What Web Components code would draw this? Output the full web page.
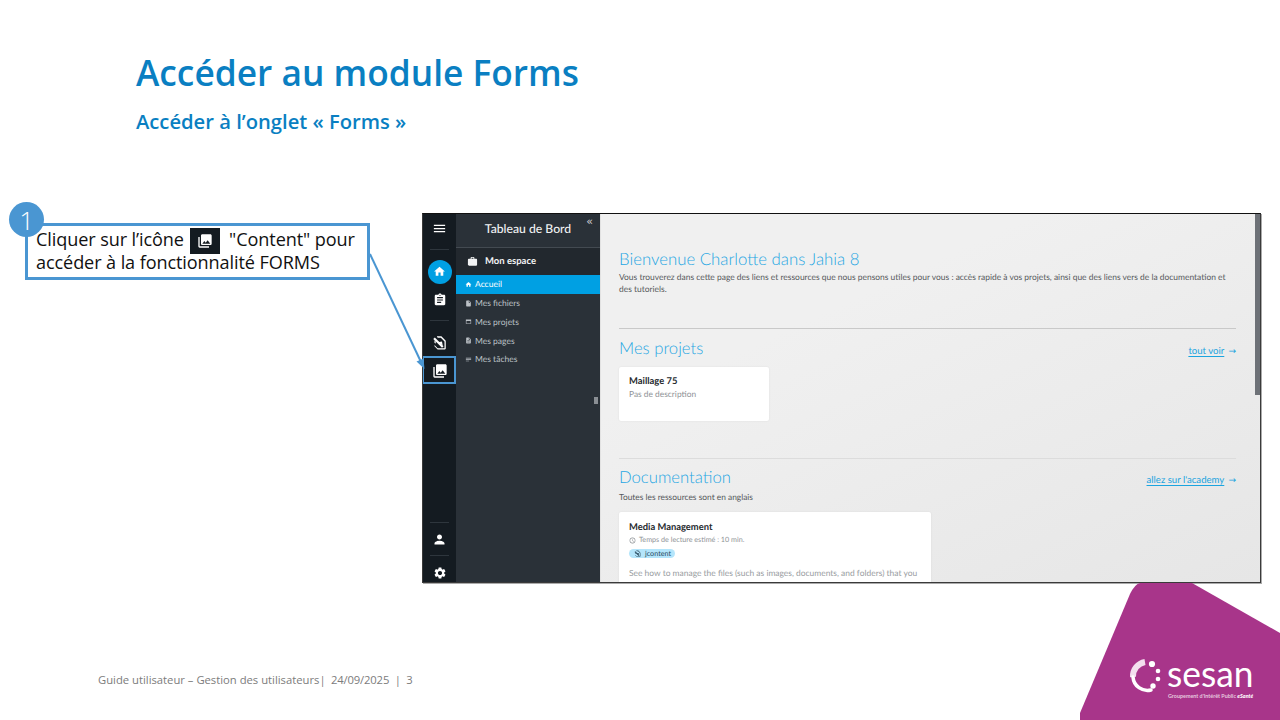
<!DOCTYPE html>
<html lang="fr">
<head>
<meta charset="utf-8">
<title>Accéder au module Forms</title>
<style>
  html, body { margin: 0; padding: 0; background: #fff; }
</style>
</head>
<body>
<slide-page>
  <span slot="title">Accéder au module Forms</span>
  <span slot="subtitle">Accéder à l’onglet « Forms »</span>
  <step-callout slot="callout" number="1">
    <span>Cliquer sur l’icône</span> <ui-icon class="inline" name="media"></ui-icon> <span>"Content" pour</span><br>
    <span>accéder à la fonctionnalité FORMS</span>
  </step-callout>
  <jahia-dashboard slot="shot"></jahia-dashboard>
  <span slot="footer">Guide utilisateur – Gestion des utilisateurs</span>
</slide-page>

<script>
/* Material style icon paths used all over the page */
const ICONS = {
    menu: '<path d="M3 18h18v-2H3v2zm0-5h18v-2H3v2zm0-7v2h18V6H3z"/>',
    home: '<path d="M10 20v-6h4v6h5v-8h3L12 3 2 12h3v8z"/>',
    clipboard: '<path d="M19 3h-4.18C14.4 1.84 13.3 1 12 1c-1.3 0-2.4.84-2.82 2H5c-1.1 0-2 .9-2 2v14c0 1.1.9 2 2 2h14c1.1 0 2-.9 2-2V5c0-1.1-.9-2-2-2zm-7 0c.55 0 1 .45 1 1s-.45 1-1 1-1-.45-1-1 .45-1 1-1zm2 14H7v-2h7v2zm3-4H7v-2h10v2zm0-4H7V7h10v2z"/>',
    media: '<path d="M22 16V4c0-1.1-.9-2-2-2H8c-1.1 0-2 .9-2 2v12c0 1.1.9 2 2 2h12c1.1 0 2-.9 2-2zm-11-4l2.03 2.71L16 11l4 5H8l3-4zM2 6v14c0 1.1.9 2 2 2h14v-2H4V6H2z"/>',
    person: '<path d="M12 12c2.21 0 4-1.79 4-4s-1.79-4-4-4-4 1.79-4 4 1.79 4 4 4zm0 2c-2.67 0-8 1.34-8 4v2h16v-2c0-2.66-5.33-4-8-4z"/>',
    gear: '<path d="M19.14 12.94c.04-.3.06-.61.06-.94 0-.32-.02-.64-.07-.94l2.03-1.58c.18-.14.23-.41.12-.61l-1.92-3.32c-.12-.22-.37-.29-.59-.22l-2.39.96c-.5-.38-1.03-.7-1.62-.94l-.36-2.54c-.04-.24-.24-.41-.48-.41h-3.84c-.24 0-.43.17-.47.41l-.36 2.54c-.59.24-1.13.57-1.62.94l-2.39-.96c-.22-.08-.47 0-.59.22L2.74 8.87c-.12.21-.08.47.12.61l2.03 1.58c-.05.3-.09.63-.09.94s.02.64.07.94l-2.03 1.58c-.18.14-.23.41-.12.61l1.92 3.32c.12.22.37.29.59.22l2.39-.96c.5.38 1.03.7 1.62.94l.36 2.54c.05.24.24.41.48.41h3.84c.24 0 .44-.17.47-.41l.36-2.54c.59-.24 1.13-.56 1.62-.94l2.39.96c.22.08.47 0 .59-.22l1.92-3.32c.12-.22.07-.47-.12-.61l-2.01-1.58zM12 15.6c-1.98 0-3.6-1.62-3.6-3.6s1.62-3.6 3.6-3.6 3.6 1.62 3.6 3.6-1.62 3.6-3.6 3.6z"/>',
    work: '<path d="M20 6h-4V4c0-1.11-.89-2-2-2h-4c-1.11 0-2 .89-2 2v2H4c-1.11 0-1.99.89-1.99 2L2 19c0 1.11.89 2 2 2h16c1.11 0 2-.89 2-2V8c0-1.11-.89-2-2-2zm-6 0h-4V4h4v2z"/>',
    file: '<path d="M14 2H6c-1.1 0-1.99.9-1.99 2L4 20c0 1.1.89 2 1.99 2H18c1.1 0 2-.9 2-2V8l-6-6zm-1 7V3.5L18.5 9H13z"/>',
    page: '<path d="M14 2H6c-1.1 0-1.99.9-1.99 2L4 20c0 1.1.89 2 1.99 2H18c1.1 0 2-.9 2-2V8l-6-6zm2 16H8v-2h8v2zm0-4H8v-2h8v2zm-3-5V3.5L18.5 9H13z"/>',
    project: '<path d="M3 5h18v15H3V5zm2 5v8h14v-8H5z"/>',
    tasks: '<path d="M3 6h18v2.4H3zM3 11h18v2.4H3zM3 16h11v2.4H3z"/>',
    clock: '<path d="M12 2a10 10 0 1 0 0 20 10 10 0 0 0 0-20zm0 18a8 8 0 1 1 0-16 8 8 0 0 1 0 16zm.5-13H11v6l5.2 3.1.8-1.2-4.5-2.7V7z"/>',
    jcontent: '<path d="M8 2h7l7 7v12.5c0 .8-.7 1.5-1.5 1.5H9l-5-5v-2l5 5h11V10.5L14.2 4.5H9.5L8 3z"/><path d="M2 6.5 4.5 4 18.5 18 16 20.5z"/><path d="M9 11.5l7-1 1 6z"/><path d="M4 8.5 6 10.5V14L4 12z"/>'
};

class UiIcon extends HTMLElement {
    connectedCallback() {
        const name = this.getAttribute("name");
        this.attachShadow({ mode: "open" }).innerHTML = `
            <style>
                :host { display: inline-flex; align-items: center; justify-content: center; color: inherit; }
                :host(.inline) {
                    width: 30px; height: 26px; margin: -4px 5px -4px 1px; --icon-size: 16px;
                    vertical-align: middle; background: #141b21; color: #fff;
                }
                svg { width: var(--icon-size, 14px); height: var(--icon-size, 14px); fill: currentColor; display: block; }
            </style>
            <svg viewBox="0 0 24 24" aria-hidden="true">${ICONS[name] || ""}</svg>`;
    }
}

/* The numbered instruction box, number sits over its top left corner */
class StepCallout extends HTMLElement {
    connectedCallback() {
        this.attachShadow({ mode: "open" }).innerHTML = `
            <style>
                :host {
                    display: block; position: relative; box-sizing: border-box;
                    width: 345px; height: 57px; padding: 2px 8px 0;
                    border: 3px solid #4a96d2; background: #fff; color: #111;
                    font: 400 18.1px/23px "Open Sans", "Noto Sans", sans-serif;
                    letter-spacing: -.1px; white-space: nowrap;
                }
                .num {
                    position: absolute; left: -19px; top: -24px; width: 35px; height: 35px;
                    border-radius: 50%; background: #4a96d2; color: #fff;
                    display: flex; align-items: center; justify-content: center;
                    font-size: 26px; font-weight: 300; line-height: 1;
                }
            </style>
            <div class="num">${this.getAttribute("number")}</div>
            <slot></slot>`;
    }
}

/* Rail button of the Jahia left bar */
class RailButton extends HTMLElement {
    connectedCallback() {
        const name = this.getAttribute("icon");
        this.attachShadow({ mode: "open" }).innerHTML = `
            <style>
                :host { display: flex; align-items: center; justify-content: center; height: var(--h, 28px); color: #fff; --icon-size: 15px; flex: none; }
                :host([active]) .wrap { width: 24px; height: 24px; border-radius: 50%; background: #00a0e3; }
                .wrap { display: flex; align-items: center; justify-content: center; }
            </style>
            <div class="wrap"><ui-icon name="${name}"></ui-icon></div>`;
    }
}

class SideItem extends HTMLElement {
    connectedCallback() {
        this.attachShadow({ mode: "open" }).innerHTML = `
            <style>
                :host {
                    display: flex; align-items: center; gap: 3px; height: 18.75px; padding-left: 9px;
                    font: 400 8.5px "Lato", sans-serif; color: #bcc1c6; --icon-size: 7px;
                }
                :host([active]) { background: #00a0e3; color: #fff; }
            </style>
            <ui-icon name="${this.getAttribute("icon")}"></ui-icon><slot></slot>`;
    }
}

/* A section of the home page: rule, heading and optional link on the right */
class DashSection extends HTMLElement {
    connectedCallback() {
        const link = this.getAttribute("link");
        this.attachShadow({ mode: "open" }).innerHTML = `
            <style>
                :host { display: block; border-top: 1px solid var(--rule, #c9c9c9); padding-top: var(--pad, 8px); }
                .head { display: flex; align-items: center; justify-content: space-between; height: 20px; }
                h2 { margin: 0; font: 300 16.7px/20px "Lato", sans-serif; color: #1fa6e3; }
                a { font: 400 9.6px "Lato", sans-serif; color: #1ba4df; text-decoration: underline; text-underline-offset: 2px; }
                span { color: #1ba4df; font: 400 9px "DejaVu Sans", sans-serif; }
            </style>
            <div class="head">
                <h2>${this.getAttribute("heading")}</h2>
                <div><a href="#">${link}</a> <span>→</span></div>
            </div>
            <slot></slot>`;
    }
}

class DashCard extends HTMLElement {
    connectedCallback() {
        this.attachShadow({ mode: "open" }).innerHTML = `
            <style>
                :host {
                    display: block; box-sizing: border-box; background: #fff; border-radius: 2px;
                    box-shadow: 0 0 2px rgba(0,0,0,.08); padding: 9px 10px; overflow: hidden;
                    font-family: "Lato", sans-serif;
                }
                h3 { margin: 0; font: 700 9.4px/12px "Lato", sans-serif; color: #25292d; }
            </style>
            <h3>${this.getAttribute("heading")}</h3>
            <slot></slot>`;
    }
}

/* The Jahia screenshot on the right of the slide */
class JahiaDashboard extends HTMLElement {
    connectedCallback() {
        this.attachShadow({ mode: "open" }).innerHTML = `
            <style>
                :host {
                    display: flex; position: relative; box-sizing: border-box; width: 839px; height: 370px;
                    border: 1px solid #3a3a3a; border-top-color: #111; overflow: hidden; background: #efefef;
                    box-shadow: 1px 1px 0 #aaa; text-rendering: geometricPrecision;
                }
                .rail { width: 33px; flex: none; background: #141b21; display: flex; flex-direction: column; align-items: stretch; }
                .rule { height: 1px; margin: 0 7px; background: #2e363d; flex: none; }
                .grow { flex: 1; }
                .side { width: 144px; flex: none; background: #2a3138; position: relative; color: #fff; font-family: "Lato", sans-serif; }
                .side h1 { margin: 0; height: 34px; box-sizing: border-box; border-bottom: 1px solid #434a51; text-align: center;
                           font: 500 12.2px/30px "Lato", sans-serif; color: #f1f2f3; }
                .collapse { position: absolute; right: 7px; top: 1px; font: 400 11px/14px "DejaVu Sans", sans-serif; color: #c9ccd0; }
                .space { display: flex; align-items: center; gap: 7px; height: 27px; padding-left: 11px; background: #22282e;
                         font: 700 9.5px "Lato", sans-serif; color: #f2f3f4; --icon-size: 11px; }
                .handle { position: absolute; right: 2px; top: 183px; width: 4px; height: 7px; background: #8a8f94; }
                .main { flex: 1; min-width: 0; box-sizing: border-box; padding: 34px 24px 0 19px; position: relative;
                        background: linear-gradient(155deg, #f0f0f0 30%, #e6e6e6 100%); box-shadow: inset 1px 0 0 #e2e2e2; }
                .main h1 { margin: 0; font: 300 16.8px/21px "Lato", sans-serif; color: #1fa6e3; }
                .main p { margin: 2px 0 0; max-width: 608px; font: 400 8.45px/12px "Lato", sans-serif; color: #55585b; }
                .scroll { position: absolute; right: 0; top: 0; width: 5px; height: 181px; background: #6d7177; }
                dash-section.first { margin-top: 33px; height: 120px; --pad: 9px; }
                dash-section.second { --rule: #dcdcdc; }
                .card1 { width: 150px; height: 54px; margin-top: 9px; }
                .card2 { width: 312px; height: 90px; margin-top: 9px; padding-top: 10px; }
                .desc { margin-top: 1px; font: 400 8.4px/11px "Lato", sans-serif; color: #8f9397; }
                .sub { margin: 4px 0 0 !important; font-size: 8.4px !important; }
                .meta { display: flex; align-items: center; gap: 3px; margin-top: 1px; font: 400 7.2px/10px "Lato", sans-serif; color: #8f9397; --icon-size: 7px; }
                .tag { display: flex; width: fit-content; align-items: center; gap: 4px; height: 9px; margin-top: 4px; padding: 0 4px 0 5px; border-radius: 5px;
                       background: #b4e5fb; color: #2a4a5e; font: 400 7.2px "Lato", sans-serif; --icon-size: 7px; }
                .text { margin-top: 8px; font: 400 8.45px/14px "Lato", sans-serif; color: #989ca0; width: 292px; }
                .mark { position: absolute; left: -1px; top: 142px; width: 34px; height: 28px; border: 2px solid #4a96d2; box-sizing: border-box; }
            </style>
            <div class="rail">
                <rail-button icon="menu" style="--h:29px"></rail-button>
                <div class="rule" style="margin-top:6px"></div>
                <rail-button icon="home" active style="--h:43px;--icon-size:13px"></rail-button>
                <rail-button icon="clipboard" style="--h:14px;--icon-size:14px"></rail-button>
                <div class="rule" style="margin-top:13px"></div>
                <rail-button icon="jcontent" style="--h:42px"></rail-button>
                <rail-button icon="media" style="--h:15px;--icon-size:16px"></rail-button>
                <div class="grow"></div>
                <div class="rule"></div>
                <rail-button icon="person" style="--h:32px"></rail-button>
                <div class="rule"></div>
                <rail-button icon="gear" style="--h:33px;margin-bottom:-7px;--icon-size:14px"></rail-button>
            </div>
            <div class="side">
                <h1>Tableau de Bord</h1>
                <span class="collapse">«</span>
                <div class="space"><ui-icon name="work"></ui-icon>Mon espace</div>
                <side-item icon="home" active>Accueil</side-item>
                <side-item icon="file">Mes fichiers</side-item>
                <side-item icon="project">Mes projets</side-item>
                <side-item icon="page">Mes pages</side-item>
                <side-item icon="tasks">Mes tâches</side-item>
                <div class="handle"></div>
            </div>
            <div class="main">
                <h1>Bienvenue Charlotte dans Jahia 8</h1>
                <p>Vous trouverez dans cette page des liens et ressources que nous pensons utiles pour vous : accès rapide à vos projets, ainsi que des liens vers de la documentation et des tutoriels.</p>
                <dash-section class="first" heading="Mes projets" link="tout voir">
                    <dash-card class="card1" heading="Maillage 75"><div class="desc">Pas de description</div></dash-card>
                </dash-section>
                <dash-section class="second" heading="Documentation" link="allez sur l'academy">
                    <p class="sub">Toutes les ressources sont en anglais</p>
                    <dash-card class="card2" heading="Media Management">
                        <div class="meta"><ui-icon name="clock"></ui-icon>Temps de lecture estimé : 10 min.</div>
                        <div class="tag"><ui-icon name="jcontent"></ui-icon>jcontent</div>
                        <div class="text">See how to manage the files (such as images, documents, and folders) that you use in your pages and content. You will also see how to organize and rotate</div>
                    </dash-card>
                </dash-section>
                <div class="scroll"></div>
            </div>
            <div class="mark"></div>`;
    }
}

/* Logo in the purple corner */
class SesanLogo extends HTMLElement {
    connectedCallback() {
        this.attachShadow({ mode: "open" }).innerHTML = `
            <style>
                :host { display: block; position: absolute; right: 0; bottom: 0; width: 200px; height: 137px; }
                svg { position: absolute; inset: 0; display: block; }
                .name { position: absolute; left: 87px; top: 78px; font: 400 36px/24px "Lato", sans-serif; color: #fff; transform: scaleX(.98); transform-origin: left; }
                .tag { position: absolute; left: 88px; top: 109px; font: 700 5.4px/8px "Lato", sans-serif; color: #e6c8df; white-space: nowrap; }
                .tag b { color: #fff; font-style: italic; font-weight: 900; }
            </style>
            <svg width="200" height="137" viewBox="0 0 200 137">
                <path d="M60 0 H112 L200 50 V137 H0 V130 L50 11 Q55 1 60 0 Z" fill="#a8358a"/>
                <path d="M65 79 A14.5 14.5 0 0 0 53 94" fill="none" stroke="#f3dfee" stroke-width="6"/>
                <path d="M53 94 A14.5 14.5 0 0 0 71 107" fill="none" stroke="#fff" stroke-width="3.5" stroke-linecap="round"/>
                <circle cx="72" cy="81" r="3.1" fill="#fff"/>
                <circle cx="78" cy="88" r="2.3" fill="#fff"/>
                <circle cx="78" cy="96" r="2.3" fill="#fff"/>
                <circle cx="73" cy="103" r="2.7" fill="#fff"/>
            </svg>
            <div class="name">sesan</div>
            <div class="tag">Groupement d'Intérêt Public <b>eSanté</b></div>`;
    }
}

/* The slide itself: title, callout and screenshot row, footer, arrow on top */
class SlidePage extends HTMLElement {
    connectedCallback() {
        this.attachShadow({ mode: "open" }).innerHTML = `
            <style>
                :host {
                    display: flex; flex-direction: column; position: relative; box-sizing: border-box;
                    width: 1280px; height: 720px; overflow: hidden; background: #fff;
                    font-family: "Open Sans", "Noto Sans", sans-serif;
                }
                header { padding: 48px 0 0 136px; height: 213px; box-sizing: border-box; color: #0a7fc2; }
                h1 { margin: 0; font: 600 35.3px/48px "Open Sans", sans-serif; }
                h2 { margin: 11px 0 0; font: 600 20.2px/28px "Open Sans", sans-serif; }
                .row { display: flex; align-items: flex-start; justify-content: space-between; padding: 0 19px 0 25px; height: 371px; }
                ::slotted([slot=callout]) { margin-top: 10px; }
                footer { margin-top: 88px; padding-left: 98px; font: 400 11.25px/16px "Open Sans", sans-serif; color: #7c7c7c; display: flex; white-space: pre; }
                footer span { letter-spacing: -.15px; }
                .arrow { position: absolute; left: 0; top: 0; pointer-events: none; }
            </style>
            <header>
                <h1><slot name="title"></slot></h1>
                <h2><slot name="subtitle"></slot></h2>
            </header>
            <div class="row">
                <slot name="callout"></slot>
                <slot name="shot"></slot>
            </div>
            <footer><slot name="footer"></slot><span>|  24/09/2025  |  3</span></footer>
            <svg class="arrow" width="1280" height="720" viewBox="0 0 1280 720">
                <line x1="370" y1="254" x2="421" y2="362" stroke="#4a96d2" stroke-width="2"/>
                <path d="M424.5 369 L416.5 361.5 L423.5 358.5 Z" fill="#4a96d2"/>
            </svg>
            <sesan-logo></sesan-logo>`;
    }
}

customElements.define("ui-icon", UiIcon);
customElements.define("step-callout", StepCallout);
customElements.define("rail-button", RailButton);
customElements.define("side-item", SideItem);
customElements.define("dash-section", DashSection);
customElements.define("dash-card", DashCard);
customElements.define("jahia-dashboard", JahiaDashboard);
customElements.define("sesan-logo", SesanLogo);
customElements.define("slide-page", SlidePage);
</script>
</body>
</html>
